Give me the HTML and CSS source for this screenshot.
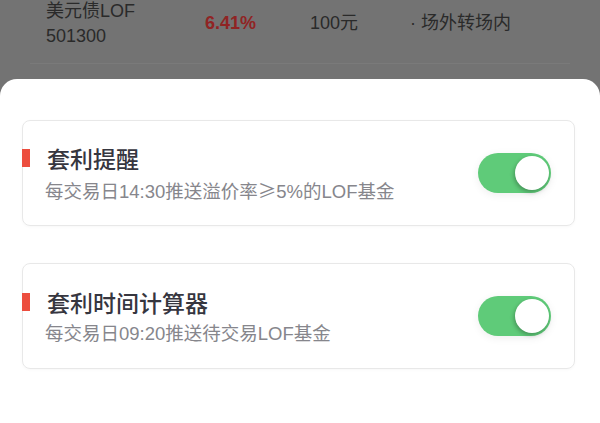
FILE: index.html
```html
<!DOCTYPE html>
<html lang="zh-CN">
<head>
<meta charset="utf-8">
<title>套利提醒</title>
<link rel="stylesheet" href="styles.css">
</head>
<body>
<div class="page">
  <div class="backdrop">
    <div class="fund-row">
      <div class="fund-name">
        <div>美元债LOF</div>
        <div>501300</div>
      </div>
      <div class="fund-rate">6.41%</div>
      <div class="fund-price">100元</div>
      <div class="fund-status">· 场外转场内</div>
    </div>
  </div>
  <div class="sheet">
    <div class="card">
      <div class="card-text">
        <div class="card-title"><span class="mark"></span><span>套利提醒</span></div>
        <div class="card-desc">每交易日14:30推送溢价率<span class="cjk">≥</span>5%的LOF基金</div>
      </div>
      <div class="toggle"><span class="knob"></span></div>
    </div>
    <div class="card">
      <div class="card-text">
        <div class="card-title"><span class="mark"></span><span>套利时间计算器</span></div>
        <div class="card-desc">每交易日09:20推送待交易LOF基金</div>
      </div>
      <div class="toggle"><span class="knob"></span></div>
    </div>
  </div>
</div>
</body>
</html>
```

FILE: styles.css
```css
html, body {
  margin: 0;
  padding: 0;
}
body {
  width: 600px;
  height: 423px;
  overflow: hidden;
  font-family: "Liberation Sans", "Noto Sans CJK SC", sans-serif;
}
.page {
  width: 600px;
  height: 423px;
  background: #737373;
  display: flex;
  flex-direction: column;
}
.backdrop {
  height: 79px;
  flex: none;
}
.fund-row {
  margin: 0 30px;
  height: 64px;
  box-sizing: border-box;
  border-bottom: 1px solid #7a7a7a;
  display: grid;
  grid-template-columns: 159px 105px 103px auto;
  align-items: start;
  padding-left: 16px;
  color: #2a2a2a;
  font-size: 18px;
}
.fund-name {
  line-height: 25px;
  margin-top: -1px;
}
.fund-rate {
  color: #902424;
  font-weight: 700;
  font-size: 18px;
  line-height: 25px;
  margin-top: 11px;
}
.fund-price,
.fund-status {
  line-height: 25px;
  margin-top: 11px;
}
.fund-status {
  margin-left: -3px;
}
.sheet {
  flex: 1;
  background: #ffffff;
  border-radius: 17px 17px 0 0;
  padding: 41px 25px 0 22px;
  display: flex;
  flex-direction: column;
  gap: 37px;
}
.card {
  height: 106px;
  box-sizing: border-box;
  border: 1px solid #e8e8e8;
  border-radius: 8px;
  display: flex;
  align-items: center;
  justify-content: space-between;
  padding-right: 23px;
  box-shadow: 0 1px 3px rgba(0, 0, 0, 0.03);
}
.card-text {
  display: flex;
  flex-direction: column;
  gap: 6px;
}
.card-title {
  display: flex;
  align-items: center;
  gap: 17px;
  font-size: 23px;
  line-height: 30px;
  font-weight: 500;
  color: #36363f;
  font-family: "Noto Sans CJK SC", sans-serif;
}
.mark {
  width: 8px;
  height: 18px;
  background: #ec4d3e;
  margin-left: -1px;
}
.card-desc {
  padding-left: 22px;
  font-size: 18.5px;
  line-height: 22px;
  color: #86868c;
}
.cjk {
  font-family: "Noto Sans CJK SC", sans-serif;
}
.toggle {
  width: 73px;
  height: 40px;
  border-radius: 20px;
  background: #5fcb79;
  position: relative;
  box-shadow: 0 2px 8px rgba(0, 0, 0, 0.07);
}
.knob {
  position: absolute;
  right: 2px;
  top: 3px;
  width: 34px;
  height: 34px;
  border-radius: 50%;
  background: #ffffff;
  box-shadow: -1px 2px 4px rgba(0, 0, 0, 0.28);
}
```
